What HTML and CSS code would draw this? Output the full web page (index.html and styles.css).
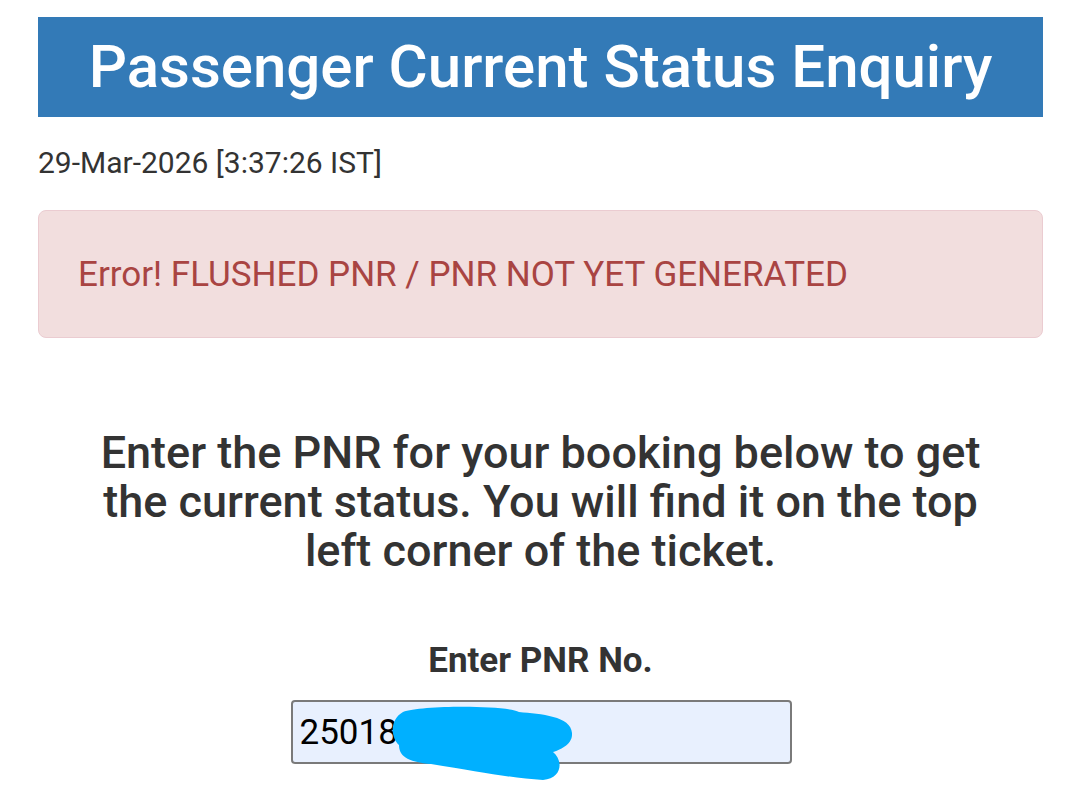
FILE: index.html
```html
<!DOCTYPE html>
<html>
<head>
<meta charset="utf-8">
<link rel="stylesheet" href="styles.css">
</head>
<body>
<div class="page">
  <header class="banner"><h1>Passenger Current Status Enquiry</h1></header>
  <div class="stamp">29-Mar-2026 [3:37:26 IST]</div>
  <div class="alert">Error! FLUSHED PNR / PNR NOT YET GENERATED</div>
  <p class="intro">Enter the PNR for your booking below to get the current status. You will find it on the top left corner of the ticket.</p>
  <div class="form">
    <label class="label" for="pnr">Enter PNR No.</label>
    <div class="field">
      <input id="pnr" class="input" type="text" value="25018">
      <svg class="scribble" width="501" height="100" viewBox="0 0 501 100">
        <path d="M112 12 C130 5 215 5 228 12 C250 14 280 16 281 33 C282 45 268 50 262 52 C272 60 272 78 252 80 C220 78 190 72 140 64 C115 62 108 55 108 45 C100 38 98 20 112 12 Z" fill="#00b0ff"/>
      </svg>
    </div>
  </div>
</div>
</body>
</html>
```

FILE: styles.css
```css
html, body {
  margin: 0;
  padding: 0;
  background: #ffffff;
}
body {
  min-height: 802px;
}
.page {
  padding: 17px 37px 40px 38px;
  font-family: Roboto, "Liberation Sans", Arial, sans-serif;
  color: #333333;
}
.banner {
  background: #337ab7;
  height: 100px;
  display: flex;
  align-items: center;
  justify-content: center;
}
.banner h1 {
  margin: 0;
  color: #ffffff;
  font-size: 60px;
  font-weight: 500;
  line-height: 1;
}
.stamp {
  margin-top: 29px;
  font-size: 30px;
  line-height: 34px;
  color: #333333;
}
.alert {
  margin-top: 30px;
  height: 128px;
  box-sizing: border-box;
  border: 1px solid #ebccd1;
  border-radius: 8px;
  background: #f2dede;
  color: #a94442;
  font-size: 35px;
  display: flex;
  align-items: center;
  padding-left: 39px;
}
.intro {
  margin: 90px auto 0;
  width: 900px;
  text-align: center;
  font-size: 45px;
  font-weight: 500;
  line-height: 49px;
  color: #333333;
}
.form {
  margin-top: 66px;
  display: flex;
  flex-direction: column;
  align-items: center;
}
.label {
  font-size: 35px;
  line-height: 40px;
  font-weight: 700;
  color: #333333;
}
.field {
  position: relative;
  margin-top: 19px;
  margin-left: 1px;
}
.input {
  display: block;
  width: 501px;
  height: 64px;
  box-sizing: border-box;
  background: #e8f0fe;
  border: 2px solid #7a7a7a;
  border-radius: 4px;
  font-family: Roboto, "Liberation Sans", Arial, sans-serif;
  font-size: 35px;
  color: #000000;
  padding: 0 7px;
}
.scribble {
  position: absolute;
  left: 0;
  top: 0;
}
```
